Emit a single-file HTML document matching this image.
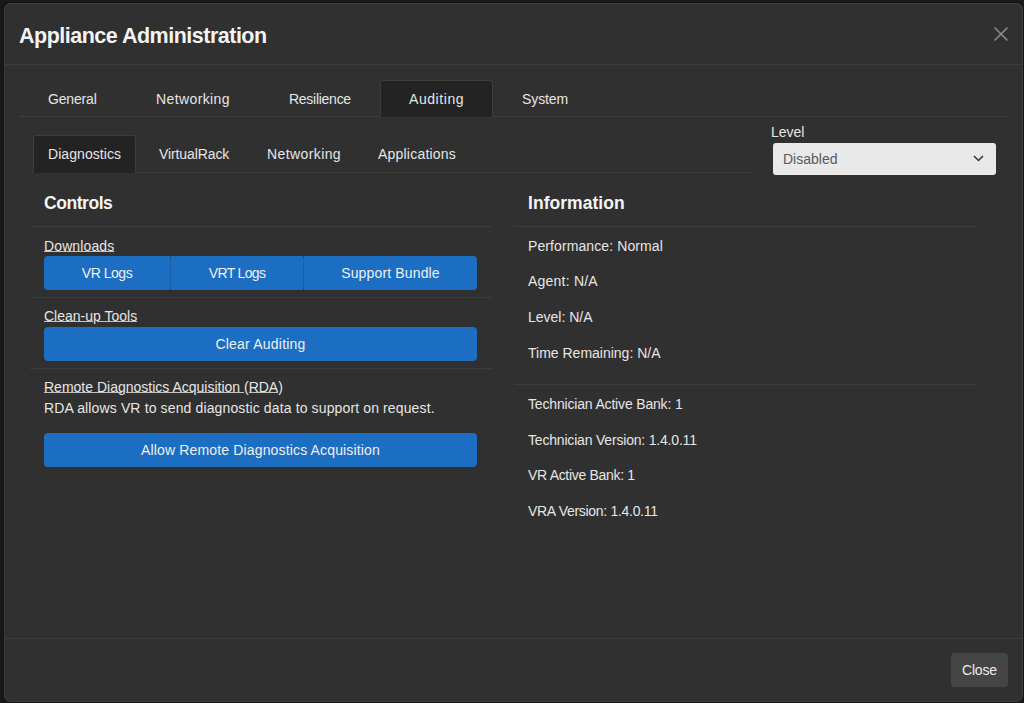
<!DOCTYPE html>
<html><head><meta charset="utf-8">
<style>
*{box-sizing:border-box;margin:0;padding:0}
html,body{width:1024px;height:703px;overflow:hidden;background:#1a1a1a;font-family:"Liberation Sans",sans-serif;color:#e6e6e6}
.modal{position:absolute;left:4px;top:3px;width:1019px;height:699px;background:#303030;border:1px solid #3d3d3d;border-radius:6px;box-shadow:0 0 3px 1px rgba(0,0,0,0.35)}
.abs{position:absolute;white-space:nowrap}
.hline{position:absolute;height:1px;background:#3d3d3d}
.title{left:19px;top:24px;font-size:21.5px;font-weight:bold;color:#f4f4f4;letter-spacing:-0.5px}
.tab{position:absolute;font-size:14px;color:#e6e6e6;line-height:16px}
.tabact{position:absolute;background:#232323;border:1px solid #3d3d3d;border-bottom:none;border-radius:3px 3px 0 0}
.h5{font-size:17.5px;font-weight:bold;color:#f4f4f4}
.txt{font-size:14px;color:#e6e6e6}
.u{text-decoration:underline;text-underline-offset:0px;text-decoration-color:#c4c4c4}
.btn{position:absolute;background:#1b6ec2;color:#f0f0f0;font-size:14px;text-align:center;line-height:35px;height:34px;white-space:nowrap}
.sel{position:absolute;left:773px;top:143px;width:223px;height:32px;background:#e9e9e9;border-radius:3px}
</style></head><body>
<div class="modal"></div>
<div class="abs title">Appliance Administration</div>
<svg class="abs" style="left:994px;top:27px" width="14" height="14" viewBox="0 0 14 14"><path d="M1 1L13 13M13 1L1 13" stroke="#8a8a8a" stroke-width="1.6" stroke-linecap="round"/></svg>
<div class="hline" style="left:5px;top:64px;width:1017px"></div>

<!-- main tabs -->
<div class="tabact" style="left:380px;top:80px;width:113px;height:37px"></div>
<div class="hline" style="left:19px;top:116px;width:361px"></div>
<div class="hline" style="left:493px;top:116px;width:515px"></div>
<div class="abs tab" style="left:48px;top:91px;letter-spacing:-0.17px">General</div>
<div class="abs tab" style="left:156px;top:91px;letter-spacing:0.39px">Networking</div>
<div class="abs tab" style="left:289px;top:91px;letter-spacing:-0.27px">Resilience</div>
<div class="abs tab" style="left:409px;top:91px;letter-spacing:0.57px">Auditing</div>
<div class="abs tab" style="left:522px;top:91px;letter-spacing:-0.1px">System</div>

<!-- sub tabs -->
<div class="tabact" style="left:33px;top:135px;width:103px;height:38px"></div>
<div class="hline" style="left:30px;top:172px;width:3px"></div>
<div class="hline" style="left:136px;top:172px;width:614px"></div>
<div class="abs tab" style="left:48px;top:146px;letter-spacing:0.07px">Diagnostics</div>
<div class="abs tab" style="left:159px;top:146px;letter-spacing:-0.1px">VirtualRack</div>
<div class="abs tab" style="left:267px;top:146px;letter-spacing:0.4px">Networking</div>
<div class="abs tab" style="left:378px;top:146px;letter-spacing:0.21px">Applications</div>

<div class="abs txt" style="left:771px;top:124px">Level</div>
<div class="sel"></div>
<div class="abs txt" style="left:783px;top:151px;color:#5a5a5a">Disabled</div>
<svg class="abs" style="left:973px;top:155px" width="11" height="7" viewBox="0 0 11 7"><path d="M1 1L5.5 5.5L10 1" stroke="#333" stroke-width="1.5" fill="none"/></svg>

<!-- controls -->
<div class="abs h5" style="left:44px;top:193px;letter-spacing:-0.45px">Controls</div>
<div class="hline" style="left:30px;top:226px;width:462px"></div>
<div class="abs txt u" style="left:44px;top:238px;letter-spacing:0.12px">Downloads</div>
<div class="btn" style="left:44px;top:256px;width:126px;border-radius:4px 0 0 4px;letter-spacing:-0.47px">VR Logs</div>
<div class="btn" style="left:171px;top:256px;width:132px;letter-spacing:-0.66px">VRT Logs</div>
<div class="btn" style="left:304px;top:256px;width:173px;border-radius:0 4px 4px 0;letter-spacing:0.15px">Support Bundle</div>
<div class="abs" style="left:170px;top:257px;width:1px;height:32px;background:#1861ac"></div>
<div class="abs" style="left:303px;top:257px;width:1px;height:32px;background:#1861ac"></div>
<div class="hline" style="left:30px;top:297px;width:462px"></div>
<div class="abs txt u" style="left:44px;top:308px">Clean-up Tools</div>
<div class="btn" style="left:44px;top:327px;width:433px;border-radius:4px;letter-spacing:0.22px">Clear Auditing</div>
<div class="hline" style="left:30px;top:368px;width:462px"></div>
<div class="abs txt u" style="left:44px;top:379px">Remote Diagnostics Acquisition (RDA)</div>
<div class="abs txt" style="left:44px;top:400px;letter-spacing:0.13px">RDA allows VR to send diagnostic data to support on request.</div>
<div class="btn" style="left:44px;top:433px;width:433px;border-radius:4px;letter-spacing:0.15px">Allow Remote Diagnostics Acquisition</div>

<!-- information -->
<div class="abs h5" style="left:528px;top:193px;letter-spacing:0.04px">Information</div>
<div class="hline" style="left:514px;top:226px;width:462px"></div>
<div class="abs txt" style="left:528px;top:238px;letter-spacing:0.1px">Performance: Normal</div>
<div class="abs txt" style="left:528px;top:273px;letter-spacing:0.22px">Agent: N/A</div>
<div class="abs txt" style="left:528px;top:309px">Level: N/A</div>
<div class="abs txt" style="left:528px;top:345px">Time Remaining: N/A</div>
<div class="hline" style="left:514px;top:384px;width:462px"></div>
<div class="abs txt" style="left:528px;top:396px;letter-spacing:-0.17px">Technician Active Bank: 1</div>
<div class="abs txt" style="left:528px;top:432px;letter-spacing:-0.19px">Technician Version: 1.4.0.11</div>
<div class="abs txt" style="left:528px;top:467px;letter-spacing:-0.31px">VR Active Bank: 1</div>
<div class="abs txt" style="left:528px;top:503px;letter-spacing:-0.3px">VRA Version: 1.4.0.11</div>

<!-- footer -->
<div class="hline" style="left:5px;top:638px;width:1017px"></div>
<div class="abs" style="left:951px;top:653px;width:57px;height:34px;background:#454545;border-radius:4px"></div>
<div class="abs txt" style="left:962px;top:662px;color:#ececec;letter-spacing:-0.2px">Close</div>
</body></html>
